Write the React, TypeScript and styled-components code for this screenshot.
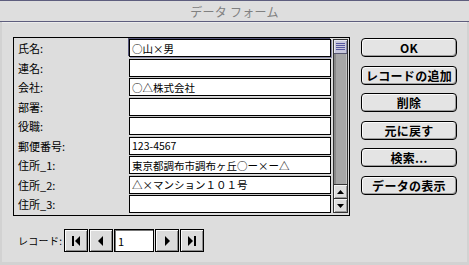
import React from "react";
import styled, { createGlobalStyle } from "styled-components";

const Global = createGlobalStyle`
  html, body { margin: 0; padding: 0; background: #cfcfcf; }
  body { font-family: "Noto Sans CJK JP", "Liberation Sans", sans-serif; }
  * { box-sizing: border-box; }
`;

const Window = styled.div`
  width: 469px;
  height: 265px;
  display: flex;
  flex-direction: column;
  background: #d2d2d2;
  overflow: hidden;
`;

const TitleBar = styled.div`
  height: 22px;
  flex: none;
  border-top: 1px solid #5e5e7e;
  border-bottom: 1px solid #5e5e7e;
  background: #dedede;
  display: flex;
  align-items: center;
  justify-content: center;
  font-size: 12px;
  color: #808080;
  letter-spacing: 0.3px;
`;

const Body = styled.div`
  flex: 1;
  margin: 0 2px 3px;
  background: #dddddd;
  border-top: 1px solid #ececec;
  padding: 14px 10px 0 11px;
  display: flex;
  gap: 11px;
`;

const LeftCol = styled.div`
  width: 337px;
  display: flex;
  flex-direction: column;
  gap: 13px;
`;

const Frame = styled.div`
  height: 179px;
  border: 1px solid #000;
  display: flex;
  padding: 1px 1px 0 0;
`;

const FieldGrid = styled.div`
  display: grid;
  grid-template-columns: 115px 202px;
  grid-auto-rows: 19.5px;
`;

const Label = styled.div`
  height: 18px;
  padding-left: 4px;
  display: flex;
  align-items: center;
  font-size: 11px;
  color: #000;
`;

const Field = styled.div<{ $focused?: boolean }>`
  height: 18px;
  border: 1px solid #000;
  background: #fff;
  padding-left: 2px;
  display: flex;
  align-items: center;
  font-size: 10.5px;
  color: #000;
  white-space: nowrap;
  overflow: hidden;
  box-shadow: ${(p) => (p.$focused ? "-1px -1px 0 #55557a, 1px 1px 0 #8a8aa8" : "0 -1px 0 #c4c4c4")};
`;

const Scrollbar = styled.div`
  margin-left: 2px;
  width: 15px;
  height: 174px;
  border: 1px solid #333;
  display: flex;
  flex-direction: column;
  background: #a8a8a8;
`;

const Thumb = styled.div`
  height: 14px;
  flex: none;
  background: #c8c8dc;
  border-bottom: 1px solid #555570;
  box-shadow: inset 1px 1px 0 #e6e6f2, inset -1px 0 0 #8888a8;
  display: flex;
  align-items: center;
  justify-content: center;
`;

const Track = styled.div`
  flex: 1;
  background: #a6a6a6;
  box-shadow: inset 2px 0 0 #8a8a8a, inset -1px 0 0 #c2c2c2;
`;

const Arrow = styled.div`
  height: 14px;
  flex: none;
  background: #dedede;
  border-top: 1px solid #333;
  box-shadow: inset 1px 1px 0 #f4f4f4, inset -1px -1px 0 #9a9a9a;
  display: flex;
  align-items: center;
  justify-content: center;
`;

const NavRow = styled.div`
  display: flex;
  align-items: center;
  height: 23px;
  padding-left: 5px;
  gap: 1px;
`;

const NavLabel = styled.div`
  width: 45px;
  flex: none;
  font-size: 10px;
  letter-spacing: 0.3px;
  color: #000;
  white-space: nowrap;
`;

const NavButton = styled.div`
  width: 24px;
  height: 23px;
  flex: none;
  border: 1px solid #000;
  background: #dcdcdc;
  box-shadow: inset 1px 1px 0 #fbfbfb, inset -1px -1px 0 #8e8e8e;
  display: flex;
  align-items: center;
  justify-content: center;
`;

const RecordInput = styled.div`
  width: 40px;
  height: 23px;
  flex: none;
  border: 1px solid #000;
  background: #fff;
  box-shadow: inset 1px 1px 0 #777;
  padding-left: 3px;
  display: flex;
  align-items: center;
  font-size: 11px;
  color: #000;
`;

const ButtonCol = styled.div`
  width: 96px;
  display: flex;
  flex-direction: column;
  gap: 8.5px;
  padding-top: 1px;
`;

const Button = styled.div`
  height: 19px;
  border: 1px solid #000;
  border-radius: 4px;
  background: #e4e4e4;
  box-shadow: inset 1px 1px 0 #fafafa, inset -1px -1px 0 #9c9c9c;
  display: flex;
  align-items: center;
  justify-content: center;
  font-size: 12px;
  font-weight: bold;
  color: #000;
  white-space: nowrap;
  letter-spacing: 0.3px;
`;

const fields: { label: string; value: string }[] = [
  { label: "氏名:", value: "○山×男" },
  { label: "連名:", value: "" },
  { label: "会社:", value: "○△株式会社" },
  { label: "部署:", value: "" },
  { label: "役職:", value: "" },
  { label: "郵便番号:", value: "123-4567" },
  { label: "住所_1:", value: "東京都調布市調布ヶ丘○ー×ー△" },
  { label: "住所_2:", value: "△×マンション１０１号" },
  { label: "住所_3:", value: "" },
];

const buttons = ["OK", "レコードの追加", "削除", "元に戻す", "検索...", "データの表示"];

const FirstIcon = () => (
  <svg width="10" height="10" viewBox="0 0 10 10">
    <rect x="1" y="0" width="2" height="10" fill="#000" />
    <polygon points="9,0 9,10 4,5" fill="#000" />
  </svg>
);
const PrevIcon = () => (
  <svg width="10" height="10" viewBox="0 0 10 10">
    <polygon points="7,0 7,10 2,5" fill="#000" />
  </svg>
);
const NextIcon = () => (
  <svg width="10" height="10" viewBox="0 0 10 10">
    <polygon points="3,0 3,10 8,5" fill="#000" />
  </svg>
);
const LastIcon = () => (
  <svg width="10" height="10" viewBox="0 0 10 10">
    <polygon points="1,0 1,10 6,5" fill="#000" />
    <rect x="7" y="0" width="2" height="10" fill="#000" />
  </svg>
);

export default function App() {
  return (
    <>
      <Global />
      <Window>
        <TitleBar>データ フォーム</TitleBar>
        <Body>
          <LeftCol>
            <Frame>
              <FieldGrid>
                {fields.map((f, i) => (
                  <React.Fragment key={f.label}>
                    <Label>{f.label}</Label>
                    <Field $focused={i === 0}>{f.value}</Field>
                  </React.Fragment>
                ))}
              </FieldGrid>
              <Scrollbar>
                <Thumb>
                  <svg width="9" height="8" viewBox="0 0 9 8">
                    <rect x="0" y="0" width="9" height="1" fill="#5656a0" />
                    <rect x="0" y="2" width="9" height="1" fill="#5656a0" />
                    <rect x="0" y="4" width="9" height="1" fill="#5656a0" />
                    <rect x="0" y="6" width="9" height="1" fill="#5656a0" />
                  </svg>
                </Thumb>
                <Track />
                <Arrow>
                  <svg width="7" height="4" viewBox="0 0 7 4">
                    <polygon points="3.5,0 7,4 0,4" fill="#000" />
                  </svg>
                </Arrow>
                <Arrow>
                  <svg width="7" height="4" viewBox="0 0 7 4">
                    <polygon points="0,0 7,0 3.5,4" fill="#000" />
                  </svg>
                </Arrow>
              </Scrollbar>
            </Frame>
            <NavRow>
              <NavLabel>レコード:</NavLabel>
              <NavButton><FirstIcon /></NavButton>
              <NavButton><PrevIcon /></NavButton>
              <RecordInput>1</RecordInput>
              <NavButton><NextIcon /></NavButton>
              <NavButton><LastIcon /></NavButton>
            </NavRow>
          </LeftCol>
          <ButtonCol>
            {buttons.map((b) => (
              <Button key={b}>{b}</Button>
            ))}
          </ButtonCol>
        </Body>
      </Window>
    </>
  );
}
